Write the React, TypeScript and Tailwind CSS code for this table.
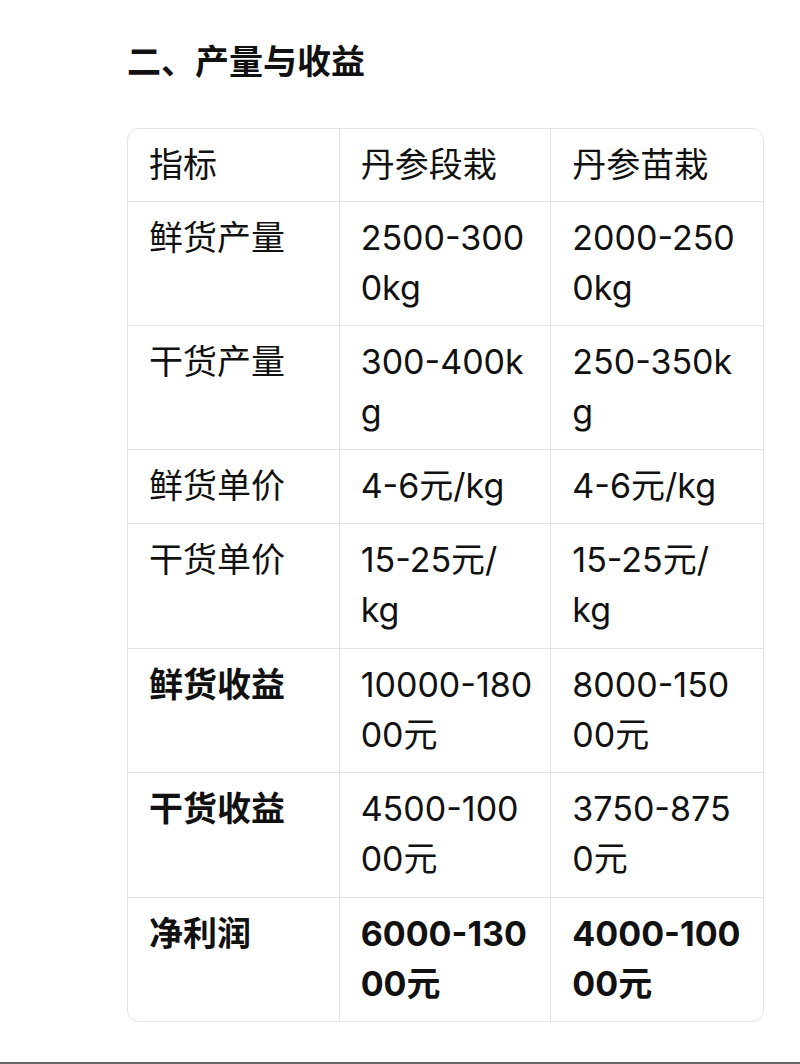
const rows: { label: string; a: string[]; b: string[]; labelWeight?: string; valueWeight?: string }[] = [
  { label: "鲜货产量", a: ["2500-300", "0kg"], b: ["2000-250", "0kg"] },
  { label: "干货产量", a: ["300-400k", "g"], b: ["250-350k", "g"] },
  { label: "鲜货单价", a: ["4-6元/kg"], b: ["4-6元/kg"] },
  { label: "干货单价", a: ["15-25元/", "kg"], b: ["15-25元/", "kg"] },
  { label: "鲜货收益", a: ["10000-180", "00元"], b: ["8000-150", "00元"], labelWeight: "font-semibold" },
  { label: "干货收益", a: ["4500-100", "00元"], b: ["3750-875", "0元"], labelWeight: "font-semibold" },
  { label: "净利润", a: ["6000-130", "00元"], b: ["4000-100", "00元"], labelWeight: "font-bold", valueWeight: "font-bold" },
];

function Cell({
  lines,
  weight = "font-normal",
  last = false,
  bottom = true,
  pad = "pb-[12px]",
}: {
  lines: string[];
  weight?: string;
  last?: boolean;
  bottom?: boolean;
  pad?: string;
}) {
  return (
    <div
      className={`pl-[21px] pr-2 pt-[11px] ${pad} text-[34px] leading-[50px] ${weight} ${last ? "" : "border-r"} ${bottom ? "border-b" : ""} border-[#e3e3e3]`}
    >
      {lines.map((l, i) => (
        <div key={i} className="whitespace-nowrap">
          {l}
        </div>
      ))}
    </div>
  );
}

export default function App() {
  return (
    <div
      className="w-[800px] h-[1064px] bg-white text-[#111] flex flex-col"
      style={{ fontFamily: 'Inter, "Noto Sans CJK SC", sans-serif' }}
    >
      <div className="pl-[127px] pt-[38px]">
        <h2 className="text-[34px] leading-[48px] font-semibold">二、产量与收益</h2>
        <div className="mt-[42px] w-[637px] border border-[#e3e3e3] rounded-[12px] overflow-hidden grid grid-cols-3">
          <Cell lines={["指标"]} pad="pb-[11px]" />
          <Cell lines={["丹参段栽"]} pad="pb-[11px]" />
          <Cell lines={["丹参苗栽"]} pad="pb-[11px]" last />
          {rows.map((r, i) => {
            const isLast = i === rows.length - 1;
            const pad = i === 3 || i === 5 ? "pb-[13px]" : "pb-[12px]";
            return [
              <Cell key={r.label + "l"} lines={[r.label]} weight={r.labelWeight} bottom={!isLast} pad={pad} />,
              <Cell key={r.label + "a"} lines={r.a} weight={r.valueWeight} bottom={!isLast} pad={pad} />,
              <Cell key={r.label + "b"} lines={r.b} weight={r.valueWeight} bottom={!isLast} pad={pad} last />,
            ];
          })}
        </div>
      </div>
      <div className="flex-1" />
      <div className="h-[2px] bg-[#666]" />
    </div>
  );
}
